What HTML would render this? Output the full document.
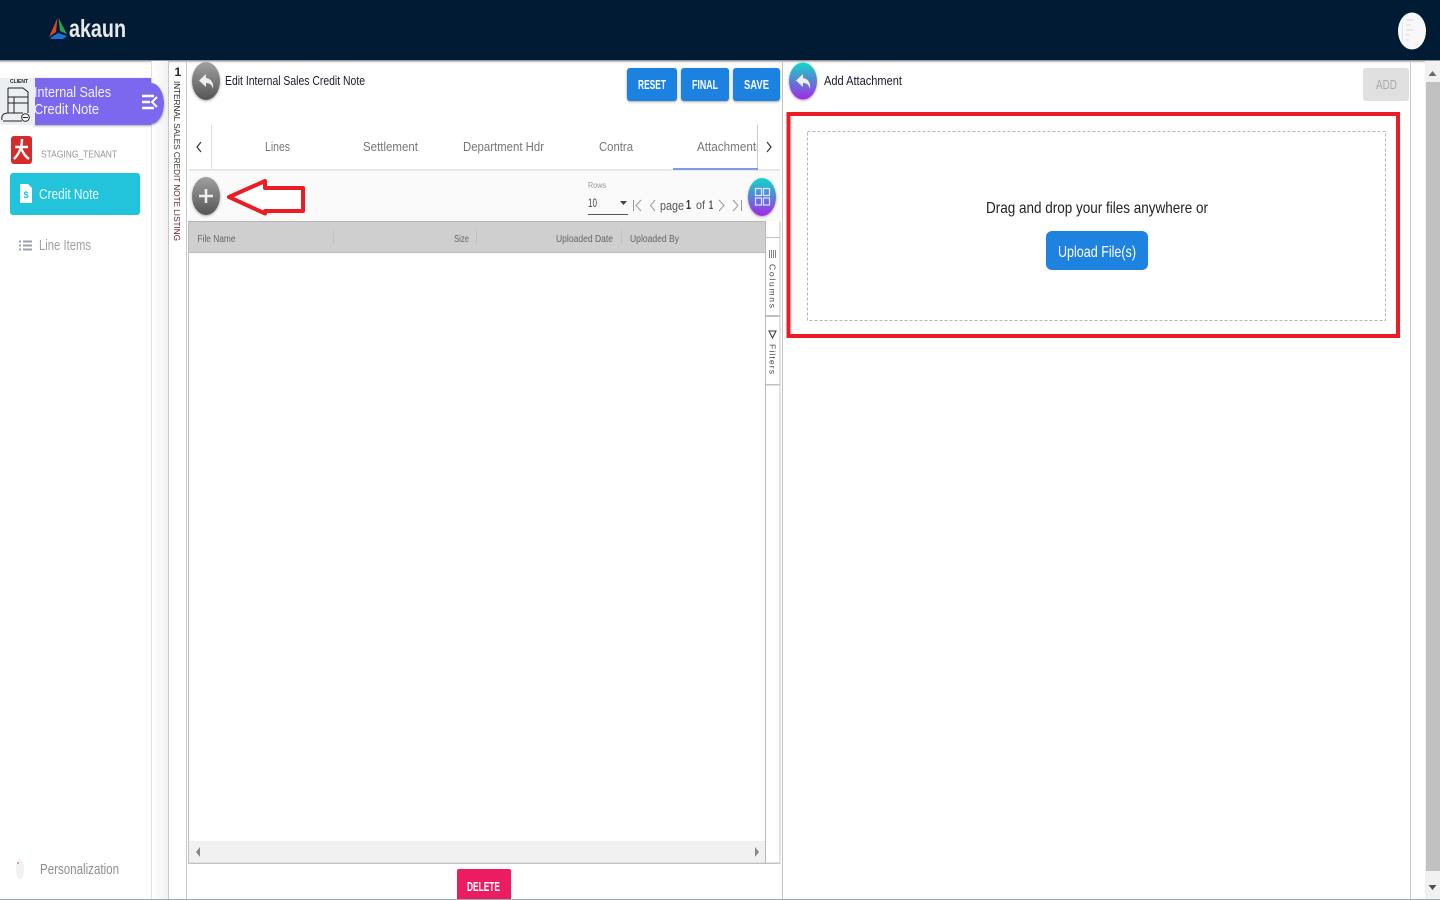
<!DOCTYPE html>
<html><head><meta charset="utf-8"><title>Add Attachment</title>
<style>
html,body{margin:0;padding:0;width:1440px;height:900px;overflow:hidden;background:#fff}
svg{display:block}
text{font-family:"Liberation Sans",sans-serif}
</style></head><body>
<svg width="1440" height="900" viewBox="0 0 1440 900" xmlns="http://www.w3.org/2000/svg">
<defs>
<linearGradient id="gr" x1="0" y1="0" x2="0" y2="1"><stop offset="0" stop-color="#a0a0a0"/><stop offset="1" stop-color="#555"/></linearGradient>
<linearGradient id="tp" x1="0" y1="0" x2="0" y2="1"><stop offset="0" stop-color="#10d8c4"/><stop offset="1" stop-color="#a428e8"/></linearGradient>
<linearGradient id="sh" x1="0" y1="0" x2="0" y2="1"><stop offset="0" stop-color="#777"/><stop offset="1" stop-color="#fff" stop-opacity="0"/></linearGradient>
<linearGradient id="sb" x1="0" y1="0" x2="1" y2="0"><stop offset="0" stop-color="#fff"/><stop offset="1" stop-color="#f1f1f1"/></linearGradient>
<linearGradient id="vt" x1="0" y1="0" x2="1" y2="0"><stop offset="0" stop-color="#222"/><stop offset=".55" stop-color="#4a3a2a"/><stop offset="1" stop-color="#7a1a2a"/></linearGradient>
<filter id="ds" x="-30%" y="-30%" width="160%" height="170%"><feDropShadow dx="0" dy="1" stdDeviation="1.200" flood-color="#000" flood-opacity=".35"/></filter>
</defs>
<rect width="1440" height="900" fill="#fff"/>

<!-- header -->
<rect width="1440" height="60" fill="#021b35"/>
<rect y="60" width="1440" height="4" fill="url(#sh)"/>
<path d="M57.500 18L49 37L56 32Z" fill="#d9472b"/><path d="M58.500 18L67 34L60 31Z" fill="#2f9e4f"/><path d="M50 38L58 33L67 36L63 39H52Z" fill="#1f6fd8"/>
<text x="69" y="37" font-size="25" font-weight="bold" fill="#e9e9e9" textLength="57" lengthAdjust="spacingAndGlyphs">akaun</text>
<ellipse cx="1412" cy="31" rx="14" ry="18.500" fill="#f8f8f8"/>
<rect x="1402" y="22" width="1" height="20" fill="#dde4f0"/><path d="M1406 20h8M1406 25h5M1406 30h7M1406 35h4M1406 40h3" stroke="#d8d8d8"/>

<!-- frame lines -->
<rect x="152" y="61" width="16" height="839" fill="url(#sb)"/>
<rect x="151" y="61" width="1" height="839" fill="#dfdfdf"/>
<rect x="168" y="61" width="1" height="839" fill="#c8c8c8"/>
<rect x="186" y="61" width="1" height="839" fill="#c9c9c9"/>
<rect x="782" y="61" width="1" height="839" fill="#c4c4c4"/>
<rect x="1410" y="61" width="1" height="839" fill="#c8c8c8"/>

<!-- sidebar title -->
<path d="M34 78H151V83A13 20.500 0 0 1 151 124V125H34Z" fill="#7b68ee" filter="url(#ds)"/>
<rect x="0" y="78" width="35" height="47" fill="#ebeef3"/>
<path d="M8 88H23L28 92V113M8 88V113M8 97H28M8 103H28M14 97V113M2 120C1 115 4 113 8 113H23M3 121H22" fill="none" stroke="#222" stroke-width="1"/>
<circle cx="25.500" cy="117.500" r="3.800" fill="#fff" stroke="#222"/><path d="M23 117.500h5" stroke="#222"/>
<text x="10" y="83" font-size="5" font-weight="bold" fill="#222">CLIENT</text>
<text x="34" y="97" font-size="15" fill="#f4f2ff" textLength="77" lengthAdjust="spacingAndGlyphs">Internal Sales</text>
<text x="34" y="114" font-size="15" fill="#f4f2ff" textLength="65" lengthAdjust="spacingAndGlyphs">Credit Note</text>
<path d="M142 96H154M142 102H150M142 108H154" stroke="#fff" stroke-width="2.500"/><path d="M157 97L152 102L157 107" fill="none" stroke="#fff" stroke-width="2"/>

<rect x="11" y="136" width="21" height="28" rx="3" fill="#d62b2b"/>
<path d="M22 139C22 146 20 153 14 159M15 147H28M21 148C23 153 26 157 29 159" fill="none" stroke="#fff" stroke-width="2.400"/>
<text x="41" y="157.500" font-size="10.500" fill="#979797" textLength="76" lengthAdjust="spacingAndGlyphs">STAGING_TENANT</text>

<rect x="10" y="173" width="130" height="42" rx="3" fill="#22c4dc"/>
<path d="M20 184H28L32 188V203H20Z" fill="#fff"/>
<text x="23.500" y="198" font-size="9" font-weight="bold" fill="#22c4dc">$</text>
<text x="39" y="199" font-size="15" fill="#f4fdff" textLength="60" lengthAdjust="spacingAndGlyphs">Credit Note</text>

<path d="M19 241.500h2M19 245.500h2M19 249.500h2M23 241.500h9M23 245.500h9M23 249.500h9" stroke="#9aa0a8" stroke-width="2"/>
<text x="39" y="250" font-size="15" fill="#a0a0a0" textLength="52" lengthAdjust="spacingAndGlyphs">Line Items</text>

<ellipse cx="20" cy="869" rx="4" ry="10" fill="#f0f1f3"/><rect x="17" y="862" width="2" height="2" fill="#e0a0a0"/>
<text x="40" y="874" font-size="15" fill="#8e8e8e" textLength="79" lengthAdjust="spacingAndGlyphs">Personalization</text>

<!-- vertical label -->
<text font-size="12" font-weight="bold" fill="#222" transform="translate(174.500 76)" textLength="5">1</text>
<text font-size="8" fill="url(#vt)" transform="translate(174 81) rotate(90)" textLength="160" lengthAdjust="spacingAndGlyphs">INTERNAL SALES CREDIT NOTE LISTING</text>

<!-- left panel top -->
<ellipse cx="206" cy="81" rx="14" ry="19" fill="url(#gr)" filter="url(#ds)"/>
<path d="M206 74L199 80.500L206 87V83C210 83 212 85 213 89C214 83 211 78.500 206 78Z" fill="#eee"/>
<text x="225" y="85" font-size="12.500" fill="#1b1b2f" textLength="140" lengthAdjust="spacingAndGlyphs">Edit Internal Sales Credit Note</text>

<g filter="url(#ds)" fill="#1e82e0"><rect x="627" y="68" width="50" height="33" rx="3"/><rect x="681" y="68" width="48" height="33" rx="3"/><rect x="733" y="68" width="47" height="33" rx="3"/></g>
<g font-size="12.500" font-weight="bold" fill="#fff">
<text x="638" y="89" textLength="28" lengthAdjust="spacingAndGlyphs">RESET</text>
<text x="692" y="89" textLength="26" lengthAdjust="spacingAndGlyphs">FINAL</text>
<text x="744" y="89" textLength="25" lengthAdjust="spacingAndGlyphs">SAVE</text></g>

<!-- tabs -->
<rect x="211" y="125" width="1" height="45" fill="#ddd"/>
<rect x="189" y="169" width="591" height="2" fill="#e8e8e8"/>
<path d="M201 142L197 147L201 152" fill="none" stroke="#333" stroke-width="1.200"/>
<path d="M767 142L771 147L767 152" fill="none" stroke="#333" stroke-width="1.200"/>
<g font-size="13" fill="#777">
<text x="265" y="151" textLength="25" lengthAdjust="spacingAndGlyphs">Lines</text>
<text x="363" y="151" textLength="55" lengthAdjust="spacingAndGlyphs">Settlement</text>
<text x="463" y="151" textLength="81" lengthAdjust="spacingAndGlyphs">Department Hdr</text>
<text x="599" y="151" textLength="34" lengthAdjust="spacingAndGlyphs">Contra</text>
<text x="697" y="151" textLength="65" lengthAdjust="spacingAndGlyphs">Attachments</text>
</g>
<rect x="757" y="125" width="7" height="44" fill="#fff"/>
<rect x="757" y="125" width="1" height="45" fill="#ccc"/>
<rect x="673" y="168" width="85" height="2" fill="#7d9be8"/>

<!-- toolbar -->
<rect x="189" y="171" width="591" height="50" fill="#fafafa"/>
<ellipse cx="206" cy="196" rx="14" ry="19" fill="url(#gr)" filter="url(#ds)"/>
<path d="M206 189V203M199 196H213" stroke="#eee" stroke-width="2.600"/>
<path d="M265 181V188H303V211H265V213.500L229 197Z" fill="#fff" stroke="#ec1c24" stroke-width="4" stroke-linejoin="round"/>
<text x="588" y="188" font-size="8" fill="#999" textLength="18" lengthAdjust="spacingAndGlyphs">Rows</text>
<text x="588" y="207" font-size="12" fill="#444" textLength="9" lengthAdjust="spacingAndGlyphs">10</text>
<rect x="588" y="214" width="40" height="1" fill="#555"/>
<path d="M620 201h7l-3.500 4z" fill="#444"/>
<g fill="none" stroke="#9a9a9a" stroke-width="1"><path d="M633.500 200V211M641 200L636 205.500L641 211M655 200L650.500 205.500L655 211M719 200L724 205.500L719 211M733 200L738 205.500L733 211M741.500 200V211"/></g>
<text x="660" y="210" font-size="12.500" fill="#555" textLength="24" lengthAdjust="spacingAndGlyphs">page</text>
<text x="686" y="209" font-size="13" font-weight="bold" fill="#333" textLength="5" lengthAdjust="spacingAndGlyphs">1</text>
<text x="696" y="209" font-size="12" fill="#555" textLength="9" lengthAdjust="spacingAndGlyphs">of</text>
<text x="709" y="209" font-size="12" font-weight="bold" fill="#444" textLength="4" lengthAdjust="spacingAndGlyphs">1</text>
<ellipse cx="762" cy="197" rx="14" ry="19" fill="url(#tp)" filter="url(#ds)"/>
<g fill="none" stroke="#e4e4ff" stroke-width="1.200"><rect x="755.500" y="188.500" width="6" height="7"/><rect x="763.500" y="188.500" width="6" height="7"/><rect x="755.500" y="198" width="6" height="7"/><rect x="763.500" y="198" width="6" height="7"/></g>

<!-- grid -->
<rect x="188" y="221" width="592" height="643" fill="#fff"/>
<rect x="188" y="221" width="578" height="32" fill="#cfcfcf"/>
<rect x="188" y="221" width="578" height="1" fill="#b5b5b5"/>
<rect x="188" y="252" width="578" height="1" fill="#b9bec2"/>
<rect x="333" y="230" width="1" height="15" fill="#c2c2c2"/><rect x="476" y="230" width="1" height="15" fill="#c2c2c2"/><rect x="621" y="230" width="1" height="15" fill="#c2c2c2"/>
<g font-size="10" fill="#666">
<text x="197.500" y="242" textLength="38" lengthAdjust="spacingAndGlyphs">File Name</text>
<text x="454" y="242" textLength="15" lengthAdjust="spacingAndGlyphs">Size</text>
<text x="556" y="242" textLength="57" lengthAdjust="spacingAndGlyphs">Uploaded Date</text>
<text x="630" y="242" textLength="49" lengthAdjust="spacingAndGlyphs">Uploaded By</text></g>
<rect x="188" y="221" width="1" height="643" fill="#bcc2c6"/>
<rect x="765" y="222" width="1" height="641" fill="#b5babd"/>
<rect x="779.500" y="221" width="1" height="643" fill="#c5c9cc"/>
<rect x="188" y="862.500" width="592" height="1.500" fill="#bcc2c6"/>
<rect x="766" y="237" width="14" height="1" fill="#c4c4c4"/>
<rect x="766" y="315" width="14" height="2" fill="#c0c0c0"/>
<rect x="766" y="384" width="14" height="1.500" fill="#c0c0c0"/>
<path d="M769.500 250v8M771.500 250v8M773.500 250v8M775.500 250v8" stroke="#666" stroke-width=".8"/>
<text font-size="8.500" fill="#444" transform="translate(769.500 264) rotate(90)" textLength="44">Columns</text>
<path d="M769 331H776L772.500 338Z" fill="none" stroke="#333" stroke-width="1"/>
<text font-size="8.500" fill="#444" transform="translate(769.500 344) rotate(90)" textLength="30">Filters</text>
<rect x="189" y="841" width="576" height="21" fill="#f1f1f1"/>
<path d="M200 847V857L196 852Z" fill="#888"/><path d="M755 847V857L759 852Z" fill="#888"/>

<!-- delete -->
<path d="M457 900V871a2 2 0 0 1 2-2h50a2 2 0 0 1 2 2V900Z" fill="#ec1c62"/>
<text x="467" y="891" font-size="12.500" font-weight="bold" fill="#fff" textLength="33" lengthAdjust="spacingAndGlyphs">DELETE</text>

<!-- right panel -->
<ellipse cx="803" cy="81" rx="14" ry="18.500" fill="url(#tp)" filter="url(#ds)"/>
<path d="M803 74L796 80.500L803 87V83C807 83 809 85 810 89C811 83 808 78.500 803 78Z" fill="#eee"/>
<text x="824" y="85" font-size="12.500" fill="#1b1b2f" textLength="78" lengthAdjust="spacingAndGlyphs">Add Attachment</text>
<rect x="1363" y="68" width="46" height="33" rx="3" fill="#e0e0e0"/>
<text x="1376" y="89" font-size="12.500" fill="#a9a9a9" textLength="21" lengthAdjust="spacingAndGlyphs">ADD</text>

<rect x="788.500" y="114" width="609.500" height="222" fill="none" stroke="#ec1c24" stroke-width="4"/>
<rect x="807.500" y="131.500" width="578" height="189" fill="none" stroke="#b5b5b5" stroke-width="1" stroke-dasharray="3 2"/>
<text x="986" y="213" font-size="16" fill="#222" textLength="222" lengthAdjust="spacingAndGlyphs">Drag and drop your files anywhere or</text>
<rect x="1046" y="231" width="102" height="39" rx="6" fill="#1e82e0"/>
<text x="1058" y="257" font-size="16" fill="#fff" textLength="78" lengthAdjust="spacingAndGlyphs">Upload File(s)</text>

<!-- scrollbar -->
<rect x="1425" y="61" width="15" height="839" fill="#f1f1f1"/>
<rect x="1426" y="82" width="14" height="789" fill="#c1c1c1"/>
<path d="M1428.500 76L1432.500 71L1436.500 76Z" fill="#6b6b6b"/><path d="M1428.500 885L1432.500 890L1436.500 885Z" fill="#505050"/>
<rect y="899" width="1440" height="1" fill="#9aa8a8"/>
</svg>
</body></html>
